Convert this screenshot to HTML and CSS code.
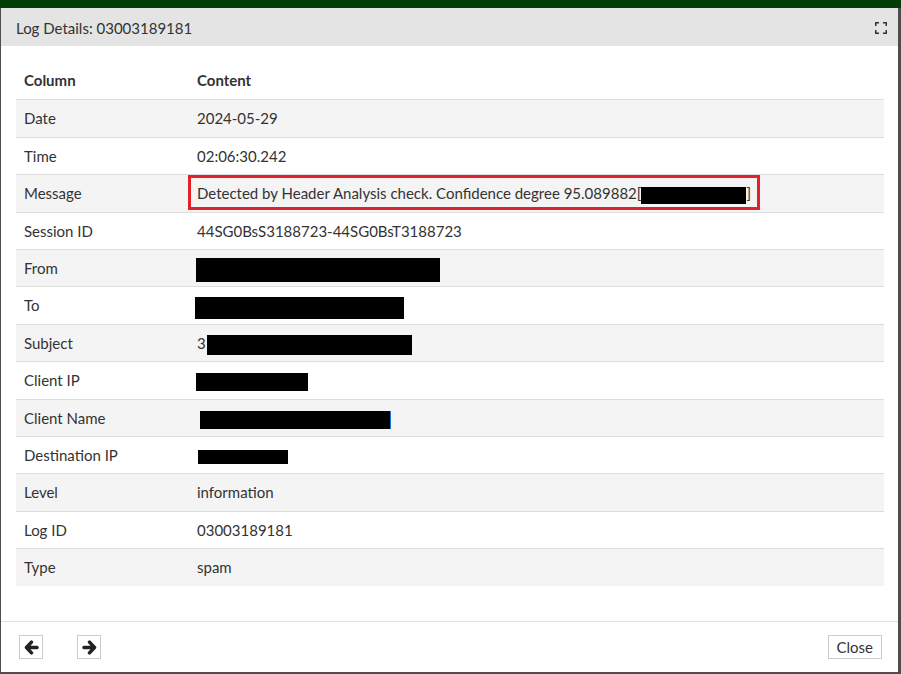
FILE: index.html
```html
<!DOCTYPE html>
<html>
<head>
<meta charset="utf-8">
<link rel="stylesheet" href="styles.css">
</head>
<body>
<div class="topbar"></div>
<div class="stage">
  <div class="modal">
    <div class="modal-header">
      <span class="title">Log Details: 03003189181</span>
      <svg class="expand" width="12" height="12" viewBox="0 0 12 12">
        <path d="M0.75 4V0.75H4 M8 0.75H11.25V4 M11.25 8V11.25H8 M4 11.25H0.75V8" fill="none" stroke="#333" stroke-width="1.5"/>
      </svg>
    </div>
    <div class="modal-body">
      <table class="grid">
        <thead>
          <tr><th class="c1">Column</th><th>Content</th></tr>
        </thead>
        <tbody>
          <tr><td>Date</td><td>2024-05-29</td></tr>
          <tr><td>Time</td><td>02:06:30.242</td></tr>
          <tr><td>Message</td><td class="marked"><span class="mark"></span>Detected by Header Analysis check. Confidence degree 95.089882[<span class="redact r-msg"></span>]</td></tr>
          <tr><td>Session ID</td><td>44SG0BsS3188723-44SG0BsT3188723</td></tr>
          <tr><td>From</td><td><span class="redact r-from"></span></td></tr>
          <tr><td>To</td><td><span class="redact r-to"></span></td></tr>
          <tr><td>Subject</td><td>3<span class="redact r-subj"></span></td></tr>
          <tr><td>Client IP</td><td><span class="redact r-cip"></span></td></tr>
          <tr><td>Client Name</td><td><span class="redact r-cname"></span></td></tr>
          <tr><td>Destination IP</td><td><span class="redact r-dip"></span></td></tr>
          <tr><td>Level</td><td>information</td></tr>
          <tr><td>Log ID</td><td>03003189181</td></tr>
          <tr><td>Type</td><td>spam</td></tr>
        </tbody>
      </table>
    </div>
    <div class="modal-footer">
      <div class="nav">
        <button class="btn icon-btn" aria-label="Previous">
          <svg width="15" height="15" viewBox="0 0 14 14"><path d="M7 2L2.3 7L7 12M2.6 7H12.2" fill="none" stroke="#222" stroke-width="3.2" stroke-linecap="round" stroke-linejoin="round"/></svg>
        </button>
        <button class="btn icon-btn" aria-label="Next">
          <svg width="15" height="15" viewBox="0 0 14 14"><path d="M7 2L11.7 7L7 12M11.4 7H1.8" fill="none" stroke="#222" stroke-width="3.2" stroke-linecap="round" stroke-linejoin="round"/></svg>
        </button>
      </div>
      <button class="btn close-btn">Close</button>
    </div>
  </div>
</div>
</body>
</html>
```

FILE: styles.css
```css
html, body {
  margin: 0;
  padding: 0;
}
body {
  background: #4d4d4d;
  font-family: Lato, "Open Sans", sans-serif;
  font-size: 15px;
  color: #333;
  width: 901px;
  height: 674px;
  overflow: hidden;
}
.topbar {
  height: 8px;
  background: #033d05;
}
.stage {
  padding-left: 1px;
}
.modal {
  width: 897px;
  height: 664px;
  background: #fff;
  display: flex;
  flex-direction: column;
}
.modal-header {
  height: 38px;
  background: #e4e4e4;
  display: flex;
  align-items: center;
  justify-content: space-between;
  padding: 0 11px 0 15px;
}
.title {
  font-size: 15px;
  color: #333;
  padding-top: 1px;
}
.expand {
  display: block;
  margin-top: 1px;
}
.modal-body {
  flex: 1;
  padding: 17px 14px 0 15px;
}
.grid {
  width: 868px;
  border-collapse: collapse;
}
.grid th, .grid td {
  text-align: left;
  padding: 8px 8px;
  line-height: 20.4px;
  height: 20.4px;
  vertical-align: middle;
  white-space: nowrap;
}
.grid th {
  font-weight: bold;
  border-bottom: 1px solid #ddd;
  padding-top: 7px;
  padding-bottom: 9px;
}
.grid th.c1 {
  width: 157px;
}
.grid td {
  border-top: 1px solid #ddd;
}
.grid tbody tr:nth-child(odd) td {
  background: #f4f4f4;
}
.marked {
  position: relative;
}
.mark {
  position: absolute;
  left: -1px;
  top: 0px;
  width: 566px;
  height: 29px;
  border: 3px solid #e4202a;
}
.redact {
  display: inline-block;
  background: #000;
  vertical-align: middle;
  margin-top: -12px;
  margin-bottom: -12px;
}
.r-msg { width: 105px; height: 17px; margin-left: 0; margin-right: 0; }
.r-from { width: 244px; height: 24px; margin-left: -1px; }
.r-to { width: 209px; height: 22px; margin-left: -2px; }
.r-subj { width: 205px; height: 20px; margin-left: 1px; }
.r-cip { width: 112px; height: 18px; margin-left: -1px; }
.r-cname { width: 190px; height: 18px; margin-left: 3px; box-shadow: 1px 0 0 #1a73e8; }
.r-dip { width: 90px; height: 14px; margin-left: 1px; }
.modal-footer {
  height: 50px;
  border-top: 1px solid #e0e0e0;
  display: flex;
  align-items: center;
  justify-content: space-between;
  padding: 0 16px 0 18px;
}
.nav {
  display: flex;
  gap: 34px;
}
.btn {
  background: #fff;
  border: 1px solid #ccc;
  border-radius: 0;
  font-family: Lato, "Open Sans", sans-serif;
  font-size: 15px;
  color: #333;
  margin: 0;
  cursor: pointer;
}
.icon-btn {
  width: 24px;
  height: 24px;
  padding: 0;
  display: flex;
  align-items: center;
  justify-content: center;
}
.close-btn {
  height: 24px;
  padding: 0 8px;
  line-height: 20px;
}
```
